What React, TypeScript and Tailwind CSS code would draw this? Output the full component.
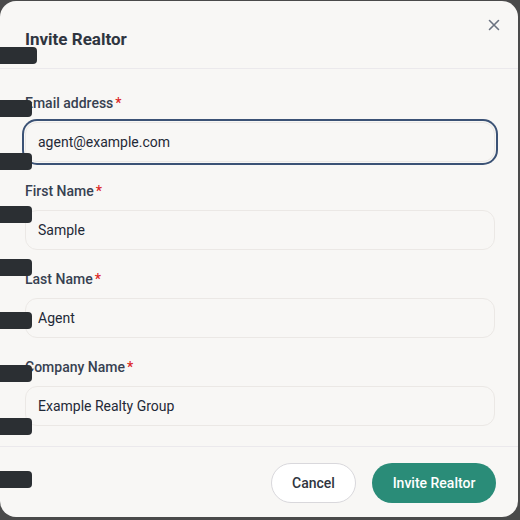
import React from "react";

const font = { fontFamily: "Roboto, 'Noto Sans', sans-serif" };

function Field({ label, value, focused }: { label: string; value: string; focused?: boolean }) {
  return (
    <div className="flex flex-col gap-[9px]">
      <label className="text-[14px] leading-5 font-medium text-[#374151]">
        {label}
        <span className="text-[#dc2626] ml-0.5">*</span>
      </label>
      <input
        readOnly
        value={value}
        className={
          "h-10 w-full rounded-xl border border-[#ebe8e5] bg-[#f8f7f5] px-3 text-[14px] text-[#1f2937] outline-none " +
          (focused ? "ring-2 ring-[#3b5275] ring-offset-1 ring-offset-[#f8f7f5]" : "")
        }
        style={font}
      />
    </div>
  );
}

export default function App() {
  const bars = [100, 153, 206, 259, 312, 365, 418, 471];
  return (
    <div className="w-[520px] h-[520px] bg-[#4a4a4a] relative overflow-hidden" style={font}>
      <div className="absolute left-0 top-[1px] w-[518px] h-[516px] bg-[#f8f7f5] rounded-2xl flex flex-col overflow-hidden">
        <div className="flex items-center justify-between pl-[25px] pr-[17px] pt-6 pb-4 h-[68px] border-b border-[#ebe9ec]">
          <h2 className="text-[17px] leading-7 font-bold text-[#2f3540]">Invite Realtor</h2>
          <svg width="14" height="14" viewBox="0 0 14 14" className="-mt-7">
            <path d="M2.5 2.5L11.5 11.5M11.5 2.5L2.5 11.5" stroke="#6b7280" strokeWidth="1.6" strokeLinecap="round" />
          </svg>
        </div>
        <div className="flex flex-col gap-[19px] pl-[25px] pr-[23px] pt-6 pb-5 border-b border-[#ebe9ec]">
          <Field label="Email address" value="agent@example.com" focused />
          <Field label="First Name" value="Sample" />
          <Field label="Last Name" value="Agent" />
          <Field label="Company Name" value="Example Realty Group" />
        </div>
        <div className="flex justify-end items-center gap-4 px-[22px] pt-4">
          <button className="h-10 w-[85px] rounded-full bg-white border border-[#d9d8dc] text-[14px] font-medium text-[#2f3540]">
            Cancel
          </button>
          <button className="h-10 w-[124px] rounded-full bg-[#2a8c78] text-[14px] font-medium text-white">
            Invite Realtor
          </button>
        </div>
      </div>
      <div className="absolute left-0 top-[47px] w-[37px] h-[17px] bg-[#2b2f33] rounded-r-[4px]" />
      {bars.map((y) => (
        <div key={y} className="absolute left-0 w-8 h-[17px] bg-[#2b2f33] rounded-r-[4px]" style={{ top: y }} />
      ))}
    </div>
  );
}
